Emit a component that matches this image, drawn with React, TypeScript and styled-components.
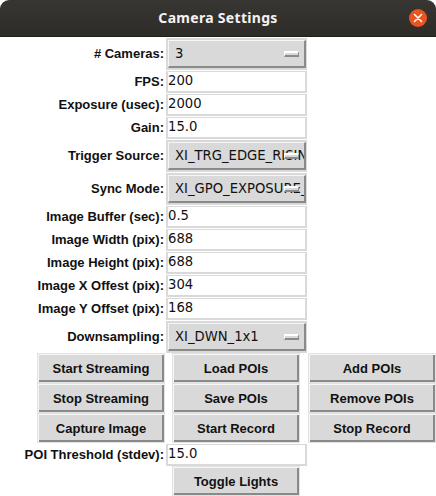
import React from 'react'
import styled, { createGlobalStyle } from 'styled-components'

const GlobalStyle = createGlobalStyle`
    html, body {
        margin: 0;
        padding: 0;
        background: #ffffff;
    }
`

const Window = styled.div`
    width: 436px;
    height: 496px;
    overflow: hidden;
    background: #ffffff;
    font-family: "Liberation Sans", Arial, sans-serif;
    color: #111111;
`
const TitleBar = styled.div`
    position: relative;
    display: flex;
    align-items: center;
    justify-content: center;
    height: 37px;
    box-sizing: border-box;
    background: linear-gradient(#383632, #2d2c29);
    border-radius: 9px 9px 0 0;
    border-bottom: 1px solid #1e1d1b;
    padding-bottom: 1px;
`
const Title = styled.div`
    font-family: "Noto Sans", "Open Sans", sans-serif;
    font-size: 14px;
    font-weight: 700;
    letter-spacing: 0.3px;
    color: #f4f3f1;
`
const CloseButton = styled.div`
    position: absolute;
    right: 9px;
    top: 9px;
    width: 18px;
    height: 18px;
    border-radius: 50%;
    background: #e95420;
    display: flex;
    align-items: center;
    justify-content: center;
`
const Form = styled.div`
    display: grid;
    grid-template-columns: 166px 141px 129px;
    grid-auto-rows: min-content;
`
const Label = styled.div<{ $tall?: boolean }>`
    height: ${(p) => (p.$tall ? 33 : 23)}px;
    display: flex;
    align-items: center;
    justify-content: flex-end;
    padding-right: 2px;
    font-size: 13px;
    font-weight: 700;
    white-space: nowrap;
`
const EntryCell = styled.div`
    height: 23px;
    box-sizing: border-box;
    padding-top: 1px;
`
const Entry = styled.div`
    height: 22px;
    width: 141px;
    box-sizing: border-box;
    border: solid #d9d9d9;
    border-width: 1px 2px 2px 2px;
    background: #ffffff;
    font-family: "DejaVu Sans", sans-serif;
    font-size: 13.2px;
    line-height: 18px;
    color: #111111;
`
const MenuCell = styled.div`
    height: 33px;
    box-sizing: border-box;
    padding-top: 1px;
`
const Menu = styled.div`
    position: relative;
    width: 141px;
    height: 32px;
    box-sizing: border-box;
    border: solid #d9d9d9;
    border-width: 2px 1px 2px 2px;
    overflow: hidden;
`
const MenuFace = styled.div`
    height: 100%;
    box-sizing: border-box;
    display: flex;
    align-items: center;
    padding: 0 0 1px 6px;
    background: #d9d9d9;
    border: solid;
    border-color: #f6f6f6 #8a8a8a #8a8a8a #f6f6f6;
    border-width: 1px 2px 2px 1px;
    font-family: "DejaVu Sans", sans-serif;
    font-size: 13.2px;
    white-space: nowrap;
    overflow: hidden;
`
const MenuMark = styled.span`
    position: absolute;
    right: 7px;
    top: 11px;
    width: 15px;
    height: 6px;
    box-sizing: border-box;
    background: #d9d9d9;
    border: solid;
    border-color: #ffffff #8a8a8a #8a8a8a #ffffff;
    border-width: 2px 1px 2px 1px;
`
const ButtonCell = styled.div<{ $flush?: boolean }>`
    height: 30px;
    display: flex;
    justify-content: flex-end;
    padding-right: ${(p) => (p.$flush ? 0 : 1)}px;
`
const Button = styled.button`
    width: 128px;
    height: 30px;
    box-sizing: border-box;
    margin: 0;
    padding: 0;
    background: #d9d9d9;
    border: 1px solid #e2e2e2;
    box-shadow: inset 1px 1px 0 #f6f6f6, inset -2px -2px 0 #8a8a8a;
    font-family: inherit;
    font-size: 13px;
    font-weight: 700;
    color: #111111;
`
const MiddleCell = styled(ButtonCell)`
    justify-content: flex-start;
    padding: 0 0 0 6px;
`
const Blank = styled.div``

type Field = { label: string; value: string; menu?: boolean }

const fields: Field[] = [
    { label: '# Cameras:', value: '3', menu: true },
    { label: 'FPS:', value: '200' },
    { label: 'Exposure (usec):', value: '2000' },
    { label: 'Gain:', value: '15.0' },
    { label: 'Trigger Source:', value: 'XI_TRG_EDGE_RISING', menu: true },
    { label: 'Sync Mode:', value: 'XI_GPO_EXPOSURE_PULSE', menu: true },
    { label: 'Image Buffer (sec):', value: '0.5' },
    { label: 'Image Width (pix):', value: '688' },
    { label: 'Image Height (pix):', value: '688' },
    { label: 'Image X Offest (pix):', value: '304' },
    { label: 'Image Y Offset (pix):', value: '168' },
    { label: 'Downsampling:', value: 'XI_DWN_1x1', menu: true },
]

const buttonRows = [
    ['Start Streaming', 'Load POIs', 'Add POIs'],
    ['Stop Streaming', 'Save POIs', 'Remove POIs'],
    ['Capture Image', 'Start Record', 'Stop Record'],
]

const App = () => {
    return (
        <Window>
            <GlobalStyle />
            <TitleBar>
                <Title>Camera Settings</Title>
                <CloseButton>
                    <svg width="10" height="10" viewBox="0 0 10 10">
                        <path d="M1.5 1.5 L8.5 8.5 M8.5 1.5 L1.5 8.5" stroke="#ffffff" strokeWidth="1.6" strokeLinecap="round" />
                    </svg>
                </CloseButton>
            </TitleBar>
            <Form>
                {fields.map((f) => (
                    <React.Fragment key={f.label}>
                        <Label $tall={f.menu}>{f.label}</Label>
                        {f.menu ? (
                            <MenuCell>
                                <Menu>
                                    <MenuFace>{f.value}</MenuFace>
                                    <MenuMark />
                                </Menu>
                            </MenuCell>
                        ) : (
                            <EntryCell>
                                <Entry>{f.value}</Entry>
                            </EntryCell>
                        )}
                        <Blank />
                    </React.Fragment>
                ))}
                {buttonRows.map((row) => (
                    <React.Fragment key={row[0]}>
                        <ButtonCell><Button>{row[0]}</Button></ButtonCell>
                        <MiddleCell><Button>{row[1]}</Button></MiddleCell>
                        <ButtonCell $flush><Button>{row[2]}</Button></ButtonCell>
                    </React.Fragment>
                ))}
                <Label>POI Threshold (stdev):</Label>
                <EntryCell>
                    <Entry>15.0</Entry>
                </EntryCell>
                <Blank />
                <Blank />
                <MiddleCell><Button>Toggle Lights</Button></MiddleCell>
                <Blank />
            </Form>
        </Window>
    )
}

export default App
